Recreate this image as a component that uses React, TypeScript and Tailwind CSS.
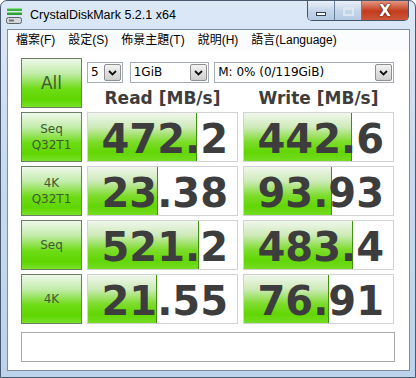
import React from 'react';

interface Row {
  label: string[];
  read: string;
  readFill: number;
  write: string;
  writeFill: number;
}

const rows: Row[] = [
  { label: ['Seq', 'Q32T1'], read: '472.2', readFill: 109, write: '442.6', writeFill: 108 },
  { label: ['4K', 'Q32T1'], read: '23.38', readFill: 70, write: '93.93', writeFill: 88 },
  { label: ['Seq'], read: '521.2', readFill: 111, write: '483.4', writeFill: 109 },
  { label: ['4K'], read: '21.55', readFill: 69, write: '76.91', writeFill: 85 },
];

const menus = ['檔案(F)', '設定(S)', '佈景主題(T)', '說明(H)', '語言(Language)'];

function AppIcon() {
  return (
    <svg width="17" height="17" viewBox="0 0 17 17" className="shrink-0">
      <rect x="1" y="1" width="15" height="3" rx="0.5" fill="#3cb043" />
      <rect x="1" y="1" width="15" height="1" fill="#8fe08a" />
      <rect x="1" y="5" width="15" height="3" rx="0.5" fill="#2f9e3a" />
      <rect x="1" y="5" width="15" height="1" fill="#7fd37a" />
      <rect x="0.5" y="10.5" width="15" height="6" rx="2" fill="#d4d8dc" stroke="#5b6168" />
      <rect x="3" y="12.5" width="5" height="2" fill="#6d747c" />
    </svg>
  );
}

function Combo({ text, width }: { text: string; width: string }) {
  return (
    <div className={`${width} h-[21px] flex items-stretch border border-[#a5acb5] bg-white`}>
      <span className="flex-1 pl-[3px] text-[12px] leading-[19px] text-black whitespace-nowrap overflow-hidden">{text}</span>
      <span className="w-[17px] m-px flex items-center justify-center border border-[#8e8f8f] rounded-[2px] bg-gradient-to-b from-[#f3f3f3] to-[#cfcfcf]">
        <svg width="9" height="6" viewBox="0 0 9 6">
          <path d="M1 1 L4.5 4.5 L8 1" fill="none" stroke="#111" strokeWidth="1.8" />
        </svg>
      </span>
    </div>
  );
}

function GreenButton({ lines, big }: { lines: string[]; big?: boolean }) {
  return (
    <div className="h-[50px] border border-[#6b7f62] bg-[linear-gradient(to_bottom,#eef8ea_0%,#c2ecaa_30%,#6edc16_62%,#5fd600_85%,#78e22a_100%)] flex flex-col items-center justify-center text-[#3f5a32]">
      {lines.map((l) => (
        <span key={l} className={big ? 'text-[17px] leading-[20px]' : 'text-[12px] leading-[16px]'}>
          {l}
        </span>
      ))}
    </div>
  );
}

function Bar({ value, fill }: { value: string; fill: number }) {
  return (
    <div className="relative h-[50px] border border-[#d2d2d2] bg-white">
      <div
        className="absolute left-0 top-0 bottom-0 border-r border-[#3f8f10] bg-[linear-gradient(to_bottom,#f0f6ec_0%,#cdeab8_30%,#7ddc2c_60%,#62d604_82%,#74dc22_100%)]"
        style={{ width: fill }}
      />
      <div className="relative h-[48px] flex items-start justify-end pr-[9px] pt-[3px] font-['DejaVu_Sans',sans-serif] font-bold text-[40px] leading-[46px] text-[#3d3d3d]">
        {value}
      </div>
    </div>
  );
}

export default function App() {
  return (
    <div className="w-[416px] h-[378px] overflow-hidden bg-white font-['DejaVu_Sans','Noto_Sans_CJK_TC',sans-serif]">
      <div className="w-[416px] h-[378px] flex flex-col rounded-t-[7px] border border-[#495a70] bg-[linear-gradient(to_bottom,#dce8f6_0%,#c9dbef_40%,#bdd3eb_100%)]">
        {/* title bar */}
        <div className="h-[28px] flex items-start">
          <div className="flex items-center pl-[5px] pt-[6px] gap-[7px]">
            <AppIcon />
            <span className="font-['Liberation_Sans',sans-serif] text-[12.5px] text-black leading-[17px]">
              CrystalDiskMark 5.2.1 x64
            </span>
          </div>
          <div className="ml-auto mr-[6px] flex h-[20px] rounded-b-[5px] overflow-hidden border border-t-0 border-[#44566e]">
            <div className="w-[27px] h-[20px] flex items-center justify-center border-r border-[#6a7f99] bg-[#c0d2e8] bg-linear-to-b from-[#e9f0f8] via-[#c4d5ea] to-[#b2c7e1]">
              <div className="w-[10px] h-[4px] mt-[5px] bg-white border border-[#2f4157]" />
            </div>
            <div className="w-[27px] h-[20px] flex items-center justify-center border-r border-[#6a7f99] bg-[#c0d2e8] bg-linear-to-b from-[#e9f0f8] via-[#c4d5ea] to-[#b2c7e1]">
              <div className="w-[11px] h-[9px] border-2 border-t-[3px] border-[#dde6f0]" />
            </div>
            <div className="w-[46px] h-[20px] flex items-center justify-center bg-[#c8452c] bg-linear-to-b from-[#e49580] via-[#c23c1d] to-[#d0583a]">
              <span className="text-white font-bold text-[15px] leading-none font-['DejaVu_Sans',sans-serif] [text-shadow:0_0_1px_#3a1006,0_0_2px_#3a1006]">
                X
              </span>
            </div>
          </div>
        </div>

        {/* client */}
        <div className="flex-1 ml-[6px] mr-[5px] mb-[6px] flex flex-col border border-[#7b8ea5] bg-white">
          <div className="h-[20px] flex items-center gap-[13px] pl-[8px] bg-[#fbfcfe] font-['Liberation_Sans','Noto_Sans_CJK_TC',sans-serif] text-[12px] text-black">
            {menus.map((m) => (
              <span key={m} className="leading-[18px]">{m}</span>
            ))}
          </div>

          <div className="flex-1 flex flex-col pl-[13px] pr-[14px] pt-[8px] pb-[7px]">
            <div className="grid grid-cols-[61px_151px_151px] gap-x-[5px] gap-y-[4px]">
              <GreenButton lines={['All']} big />
              <div className="col-span-2 flex flex-col">
                <div className="flex items-center mt-[4px]">
                  <Combo text="5" width="w-[36px]" />
                  <div className="w-[7px]" />
                  <Combo text="1GiB" width="w-[80px]" />
                  <div className="w-[5px]" />
                  <Combo text="M: 0% (0/119GiB)" width="w-[181px]" />
                </div>
                <div className="grid grid-cols-2 gap-x-[5px] mt-[5px] font-bold text-[17px] leading-[20px] text-[#3d3d3d]">
                  <span className="text-center">Read [MB/s]</span>
                  <span className="text-center">Write [MB/s]</span>
                </div>
              </div>

              {rows.map((r) => (
                <React.Fragment key={r.read}>
                  <GreenButton lines={r.label} />
                  <Bar value={r.read} fill={r.readFill} />
                  <Bar value={r.write} fill={r.writeFill} />
                </React.Fragment>
              ))}
            </div>

            <div className="mt-[8px] h-[30px] border border-[#a9a9a9] bg-white" />
          </div>
        </div>
      </div>
    </div>
  );
}
